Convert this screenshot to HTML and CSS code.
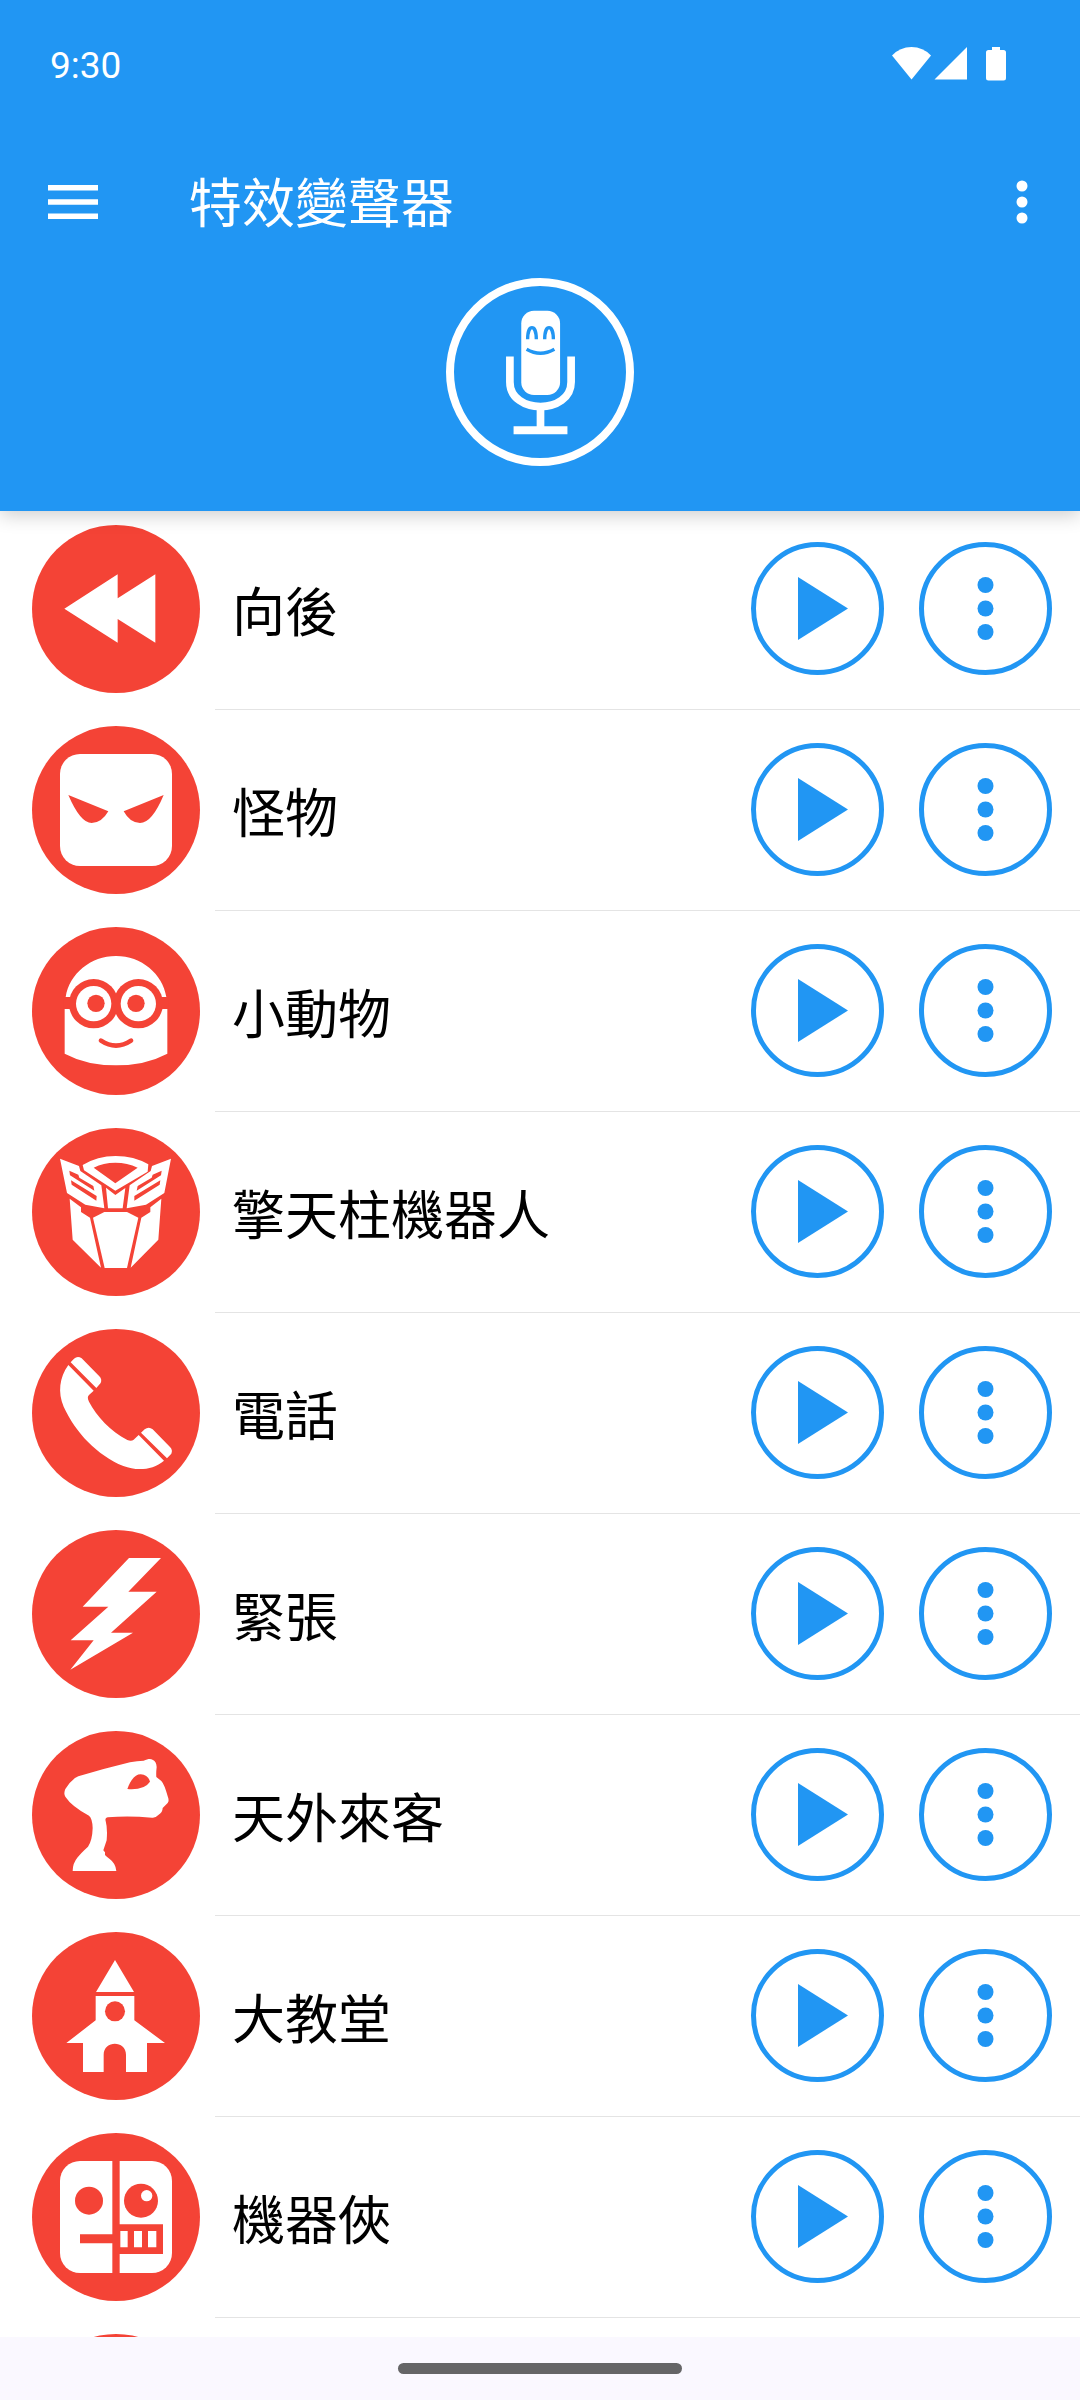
FILE: index.html
```html
<!DOCTYPE html>
<html lang="zh-Hant">
<head>
<meta charset="utf-8">
<meta name="viewport" content="width=device-width, initial-scale=1">
<title>特效變聲器</title>
<link rel="stylesheet" href="styles.css">
</head>
<body>
<svg class="sprite" aria-hidden="true">
  <symbol id="play" viewBox="0 0 133 133"><path d="M47 35V98L97 66.500z"/></symbol>
  <symbol id="more" viewBox="0 0 133 133"><circle cx="66.500" cy="43" r="8"/><circle cx="66.500" cy="66.500" r="8"/><circle cx="66.500" cy="90" r="8"/></symbol>
</svg>
<div class="app">
  <header class="header">
    <div class="status">
      <span class="clock">9:30</span>
      <svg class="status-icons" viewBox="0 0 116 36" aria-hidden="true">
        <path d="M0 9.500Q8 1 19.500 1T39 9.500L19.500 33.500z"/>
        <path d="M75 1V33.500H42.500z"/>
        <path d="M100 1h8v3h3.500q2.500 0 2.500 2.500v25.500q0 2.500-2.500 2.500h-15q-2.500 0-2.500-2.500V6.500q0-2.500 2.500-2.500h3.500z"/>
      </svg>
    </div>
    <div class="toolbar">
      <button class="tool" type="button" aria-label="選單">
        <svg class="menu-icon" viewBox="0 0 50 34"><path d="M0 0h50v5.500H0zM0 14.200h50v5.500H0zM0 28.500h50V34H0z"/></svg>
      </button>
      <h1 class="title">特效變聲器</h1>
      <button class="tool" type="button" aria-label="更多選項">
        <svg class="kebab-icon" viewBox="0 0 12 44"><circle cx="6" cy="6" r="5.500"/><circle cx="6" cy="22" r="5.500"/><circle cx="6" cy="38" r="5.500"/></svg>
      </button>
    </div>
    <div class="record">
      <button class="mic" type="button" aria-label="錄音">
        <svg viewBox="49 55 562 562">
          <rect x="274" y="153" width="116" height="252" rx="38" fill="#fff"/>
          <path d="M293 238C293 192 319 192 319 238M344 238C344 192 370 192 370 238" fill="none" stroke="#2196f3" stroke-width="10"/>
          <path d="M290 268Q331 292 373 268" fill="none" stroke="#2196f3" stroke-width="10"/>
          <path d="M240 290V366C240 464 423 464 423 366V290" fill="none" stroke="#fff" stroke-width="23"/>
          <path d="M320 445H343V498H412V522H251V498H320z" fill="#fff"/>
        </svg>
      </button>
    </div>
  </header>
  <main class="content">
    <ul class="effects">
      <li class="effect"><div class="row">
        <svg class="badge" viewBox="96 75 504 504" aria-hidden="true"><path d="M193 326L353 223V295L466 223V428L353 357V428z"/></svg>
        <span class="name">向後</span>
        <button class="ring" type="button" aria-label="播放 向後"><svg><use href="#play"/></svg></button>
        <button class="ring" type="button" aria-label="更多 向後"><svg><use href="#more"/></svg></button>
      </div></li>
      <li class="effect"><div class="row">
        <svg class="badge" viewBox="36 33 504 504" aria-hidden="true"><rect x="120" y="117" width="336" height="336" rx="60"/><path class="cut" d="M145 240L265 289Q245 324 215 324Q181 324 145 240zM431 240L311 289Q330 324 360 324Q396 324 431 240z"/></svg>
        <span class="name">怪物</span>
        <button class="ring" type="button" aria-label="播放 怪物"><svg><use href="#play"/></svg></button>
        <button class="ring" type="button" aria-label="更多 怪物"><svg><use href="#more"/></svg></button>
      </div></li>
      <li class="effect"><div class="row">
        <svg class="badge" viewBox="36 36 504 504" aria-hidden="true">
          <path d="M137 246C148 176 212 123 288 123S428 176 439 246zM134 282H442V416Q376 451 288 451T134 416z"/>
          <circle class="cut" cx="221" cy="266" r="74"/><circle class="cut" cx="355" cy="266" r="74"/>
          <path class="cut" d="M130 246H446V282H130z"/>
          <circle cx="221" cy="266" r="53"/><circle cx="355" cy="266" r="53"/>
          <circle class="cut" cx="228" cy="265" r="26"/><circle class="cut" cx="348" cy="265" r="26"/>
          <path class="cut-line" d="M243 377Q288 407 333 377"/>
        </svg>
        <span class="name">小動物</span>
        <button class="ring" type="button" aria-label="播放 小動物"><svg><use href="#play"/></svg></button>
        <button class="ring" type="button" aria-label="更多 小動物"><svg><use href="#more"/></svg></button>
      </div></li>
      <li class="effect"><div class="row">
        <svg class="badge" viewBox="36 39 504 504" aria-hidden="true">
          <path fill-rule="evenodd" d="M188 150Q232 123 287 123T385 148L383 170L286 227L192 166zM221 158L286 205L353 158Q322 143 286 143T221 158z"/>
          <path fill-rule="evenodd" d="M120 131L177 153L181 168L244 211L253 280L196 269L141 234zM148 167L150 181L223 227L220 213L178 188L175 179zM153 196L155 209L229 257L230 243z"/>
          <path fill-rule="evenodd" d="M453 131L396 153L392 168L329 211L320 280L378 269L433 234zM425 167L423 181L350 227L353 213L395 188L398 179zM421 196L419 209L343 257L343 243z"/>
          <path d="M258 218L286 240L316 219L308 280H264z"/>
          <path d="M149 251L183 277V291L210 308L243 458L158 374zM424 251L391 277V291L364 308L332 458L415 374z"/>
          <path d="M219 308L253 291H321L355 308L321 459H254z"/>
        </svg>
        <span class="name">擎天柱機器人</span>
        <button class="ring" type="button" aria-label="播放 擎天柱機器人"><svg><use href="#play"/></svg></button>
        <button class="ring" type="button" aria-label="更多 擎天柱機器人"><svg><use href="#more"/></svg></button>
      </div></li>
      <li class="effect"><div class="row">
        <svg class="badge" viewBox="36 42 504 504" aria-hidden="true">
          <path d="M145 150L221 227L207 240Q200 247 207 260C230 304 272 349 322 375Q334 380 341 374L356 360L432 437C398 465 352 469 310 453C231 420 167 353 131 275C113 232 118 188 145 150z"/>
          <path d="M152 142L162 131Q173 121 185 130L238 184Q247 193 242 204L229 219zM363 353L374 343Q386 333 398 343L450 396Q459 405 454 416L441 430z"/>
        </svg>
        <span class="name">電話</span>
        <button class="ring" type="button" aria-label="播放 電話"><svg><use href="#play"/></svg></button>
        <button class="ring" type="button" aria-label="更多 電話"><svg><use href="#more"/></svg></button>
      </div></li>
      <li class="effect"><div class="row">
        <svg class="badge" viewBox="36 645 504 504" aria-hidden="true"><path d="M327 729H423L325 830H410L273 953H339L151 1064L221 976H152L265 875H188z"/></svg>
        <span class="name">緊張</span>
        <button class="ring" type="button" aria-label="播放 緊張"><svg><use href="#play"/></svg></button>
        <button class="ring" type="button" aria-label="更多 緊張"><svg><use href="#more"/></svg></button>
      </div></li>
      <li class="effect"><div class="row">
        <svg class="badge" viewBox="36 33 504 504" aria-hidden="true">
          <path d="M175 169Q255 145 330 127Q352 123 371 122C384 117 391 115 399 120Q409 125 410 141Q408 158 409 171L424 183Q433 192 444 232Q448 243 443 249L428 264Q428 277 415 285Q405 295 396 293Q325 287 263 292Q254 293 257 303Q263 325 260 361L250 391L255 397V405Q259 410 269 417Q287 430 289 453H158Q158 430 173 412Q183 399 204 380Q217 361 218 324Q217 295 207 287Q155 259 136 230Q130 221 136 207Q148 187 165 174z"/>
          <path class="cut" d="M322 207Q338 163 362 163Q385 165 390 185Q373 211 322 207z"/>
        </svg>
        <span class="name">天外來客</span>
        <button class="ring" type="button" aria-label="播放 天外來客"><svg><use href="#play"/></svg></button>
        <button class="ring" type="button" aria-label="更多 天外來客"><svg><use href="#more"/></svg></button>
      </div></li>
      <li class="effect"><div class="row">
        <svg class="badge" viewBox="36 636 504 504" aria-hidden="true">
          <path d="M285 720L342 816H228zM227 828H343V901L435 969H381V1056H318V1004C318 960 251 960 251 1004V1056H189V969H139L227 901z"/>
          <circle class="cut" cx="285" cy="874" r="30"/>
        </svg>
        <span class="name">大教堂</span>
        <button class="ring" type="button" aria-label="播放 大教堂"><svg><use href="#play"/></svg></button>
        <button class="ring" type="button" aria-label="更多 大教堂"><svg><use href="#more"/></svg></button>
      </div></li>
      <li class="effect"><div class="row">
        <svg class="badge" viewBox="36 39 504 504" aria-hidden="true">
          <rect x="120" y="123" width="336" height="336" rx="60"/>
          <path class="cut" d="M277 120H299V313H429V402H299V462H277V370H180V343H277z"/>
          <circle class="cut" cx="207" cy="242" r="42"/><circle class="cut" cx="363" cy="242" r="51"/><circle cx="380" cy="227" r="17"/>
          <path d="M301 333H323V382H301zM342 333H366V382H342zM384 333H409V382H384z"/>
        </svg>
        <span class="name">機器俠</span>
        <button class="ring" type="button" aria-label="播放 機器俠"><svg><use href="#play"/></svg></button>
        <button class="ring" type="button" aria-label="更多 機器俠"><svg><use href="#more"/></svg></button>
      </div></li>
      <li class="effect"><div class="row">
        <svg class="badge" viewBox="0 0 504 504" aria-hidden="true"></svg>
      </div></li>
    </ul>
  </main>
  <footer class="navbar"><span class="handle"></span></footer>
</div>
</body>
</html>
```
FILE: styles.css
```css
* {
  box-sizing: border-box;
}

body {
  margin: 0;
  background: #fff;
  color: #000;
  font-family: Roboto, "Noto Sans CJK TC", sans-serif;
}

button {
  padding: 0;
  border: 0;
  background: none;
  cursor: pointer;
}

svg {
  display: block;
}

.sprite {
  position: absolute;
  width: 0;
  height: 0;
}

.app {
  display: flex;
  flex-direction: column;
  height: 100vh;
}

/* Header */
.header {
  flex: none;
  z-index: 1;
  background: #2196f3;
  color: #fff;
  box-shadow: 0 4px 18px rgba(0, 0, 0, 0.2);
}

.status {
  display: flex;
  align-items: flex-start;
  justify-content: space-between;
  height: 128px;
  padding: 46px 72px 0 50px;
}

.clock {
  font-size: 37px;
  line-height: 40px;
}

.status-icons {
  width: 116px;
  height: 36px;
  fill: #fff;
}

.toolbar {
  display: flex;
  align-items: center;
  height: 147px;
}

.tool {
  display: flex;
  flex: none;
  align-items: center;
  justify-content: center;
  width: 146px;
  height: 146px;
}

.tool:last-child {
  width: 116px;
}

.tool svg {
  fill: #fff;
}

.menu-icon {
  width: 50px;
  height: 34px;
}

.kebab-icon {
  width: 12px;
  height: 44px;
}

.title {
  flex: 1;
  margin: 0;
  padding: 6px 0 0 43px;
  font-size: 53px;
  font-weight: 400;
  line-height: 76px;
}

.record {
  display: flex;
  justify-content: center;
  padding: 3px 0 45px;
}

.mic {
  width: 188px;
  height: 188px;
  border: 8px solid #fff;
  border-radius: 50%;
}

.mic svg {
  width: 188px;
  height: 188px;
  margin: -8px;
}

/* Effect list */
.content {
  flex: 1;
  min-height: 0;
  margin-top: -2px;
  overflow-y: auto;
  scrollbar-width: none;
}

.effects {
  margin: 0;
  padding: 0;
  list-style: none;
}

.effect::after {
  display: block;
  height: 1px;
  margin-left: 215px;
  background: #e4e4e4;
  content: "";
}

.row {
  display: flex;
  align-items: center;
  padding: 16px 28px 16px 32px;
}

.badge {
  flex: none;
  width: 168px;
  height: 168px;
  border-radius: 50%;
  background: #f44336;
  fill: #fff;
}

.cut {
  fill: #f44336;
}

.cut-line {
  fill: none;
  stroke: #f44336;
  stroke-width: 14;
  stroke-linecap: round;
}

.name {
  flex: 1;
  padding: 10px 0 0 32px;
  font-size: 53px;
  line-height: 76px;
}

.ring {
  flex: none;
  width: 133px;
  height: 133px;
  margin-bottom: 1px;
  border: 5px solid #2196f3;
  border-radius: 50%;
}

.ring + .ring {
  margin-left: 35px;
}

.ring svg {
  width: 133px;
  height: 133px;
  margin: -5px;
  fill: #2196f3;
}

/* System navigation */
.navbar {
  display: flex;
  flex: none;
  z-index: 1;
  align-items: center;
  justify-content: center;
  height: 63px;
  background: #faf8ff;
}

.handle {
  width: 284px;
  height: 11px;
  border-radius: 6px;
  background: #656567;
}
```
